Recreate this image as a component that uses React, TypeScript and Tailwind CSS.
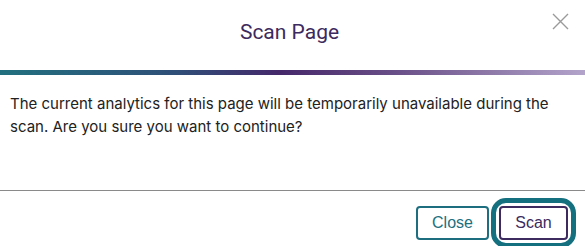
import React from "react";

export default function App() {
  return (
    <div className="w-[585px] h-[246px] bg-white overflow-hidden flex flex-col">
      <div className="relative h-[70px] flex items-center justify-center">
        <h2 className="text-[21px] text-[#3d2a5e] font-normal mt-[-4px] ml-[-6px]" style={{ fontFamily: "Roboto, 'Noto Sans', sans-serif" }}>
          Scan Page
        </h2>
        <button className="absolute right-[16px] top-[13px] w-[17px] h-[17px] flex items-center justify-center" aria-label="Close">
          <svg width="17" height="17" viewBox="0 0 17 17" fill="none" stroke="#9a9a9a" strokeWidth="1.4">
            <path d="M1 1 L16 16 M16 1 L1 16" />
          </svg>
        </button>
      </div>
      <div className="h-[5px] bg-[linear-gradient(to_right,#22707f_0%,#2f4f78_30%,#45286a_48%,#6a5088_68%,#b3a4cb_100%)]" />
      <div className="h-[115px] pl-[10px] pr-[12px] pt-[17px]">
        <p className="text-[15px] leading-[23px] text-[#222]" style={{ fontFamily: "Inter, 'Noto Sans', sans-serif" }}>
          The current analytics for this page will be temporarily unavailable during the scan. Are you sure you want to continue?
        </p>
      </div>
      <div className="h-px bg-[#8a8a8a]" />
      <div className="flex justify-end gap-[10px] pt-[15px] pr-[17px]" style={{ fontFamily: "'Liberation Sans', Arial, sans-serif" }}>
        <button className="w-[73px] h-[34px] border-2 border-[#1d6f80] rounded-[4px] text-[16px] text-[#1d6f80] bg-white">
          Close
        </button>
        <button className="relative w-[69px] h-[34px] border-2 border-[#3d2a5e] rounded-[4px] text-[16px] text-[#3d2a5e] bg-white">
          Scan
          <span className="absolute -inset-[10px] border-[5px] border-[#146f7f] rounded-[15px] pointer-events-none" />
        </button>
      </div>
    </div>
  );
}
